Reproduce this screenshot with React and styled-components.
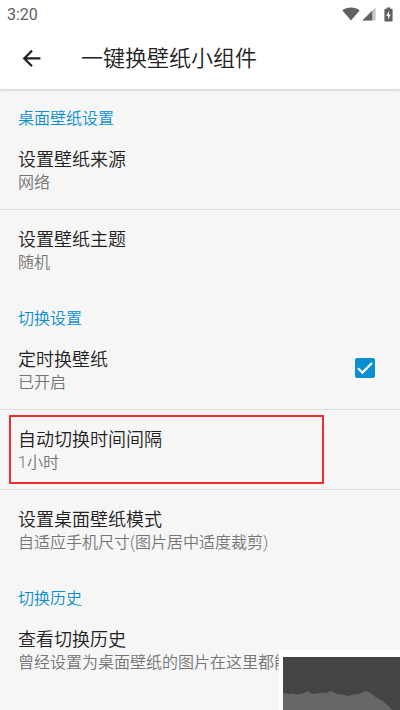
import React, { useState } from 'react';
import styled, { createGlobalStyle } from 'styled-components';

const GlobalStyle = createGlobalStyle`
  * {
    box-sizing: border-box;
  }

  body {
    margin: 0;
    background: #f6f6f6;
    font-family: Roboto, "Noto Sans CJK SC", sans-serif;
    color: #212121;
  }
`;

const Page = styled.div`
  position: relative;
  min-height: 100vh;
  overflow: hidden;
  background: #f6f6f6;
`;

const TopBar = styled.header`
  position: relative;
  background: #ffffff;
  box-shadow: 0 1px 3px rgba(0, 0, 0, 0.2);
`;

const StatusBar = styled.div`
  display: flex;
  justify-content: space-between;
  align-items: center;
  height: 28px;
  padding: 0 7px;
  font-size: 16px;
  color: #616161;
`;

const StatusIcons = styled.div`
  display: flex;
  align-items: center;

  svg {
    display: block;
  }
`;

const Toolbar = styled.div`
  display: flex;
  align-items: center;
  gap: 37px;
  height: 61px;
  padding: 0 19px;
`;

const BackButton = styled.button`
  display: flex;
  padding: 0;
  border: none;
  background: none;
  color: #212121;
  cursor: pointer;
`;

const PageTitle = styled.h1`
  margin: 0;
  font-size: 22px;
  font-weight: 350;
  line-height: 28px;
`;

const SectionTitle = styled.h2`
  height: 40px;
  margin: 0;
  padding: 18px 18px 0;
  font-size: 16px;
  font-weight: 350;
  line-height: 24px;
  color: #0a8fd0;
`;

const Row = styled.div`
  position: relative;
  display: flex;
  align-items: center;
  justify-content: space-between;
  height: 80px;
  padding: 2px 25px 0 18px;
  border: none;
  border-top: 1px solid ${props => (props.$divided ? '#dedede' : 'transparent')};
  background: none;
  font: inherit;
  font-weight: 350;
  color: inherit;
  text-align: left;
  cursor: pointer;
`;

const ButtonRow = styled(Row).attrs({ as: 'button', type: 'button' })`
  width: 100%;
`;

const CheckRow = styled(Row).attrs({ as: 'label' })``;

const RowText = styled.span`
  display: flex;
  flex-direction: column;
  white-space: nowrap;
`;

const RowTitle = styled.span`
  font-size: 18px;
  line-height: 24px;
`;

const RowSummary = styled.span`
  font-size: 16px;
  line-height: 22px;
  color: #757575;
`;

const Highlight = styled.span`
  position: absolute;
  top: 5px;
  right: 76px;
  bottom: 5px;
  left: 9px;
  border: 2px solid #f52a2a;
  pointer-events: none;
`;

const CheckboxWrap = styled.span`
  position: relative;
  display: flex;
  margin-bottom: 5px;

  svg {
    position: absolute;
    inset: 0;
    pointer-events: none;
  }
`;

const Checkbox = styled.input`
  appearance: none;
  width: 20px;
  height: 20px;
  margin: 0;
  border: 2px solid #757575;
  border-radius: 2px;

  &:checked {
    border-color: #0a8fd0;
    background: #0a8fd0;
  }
`;

const Preview = styled.div`
  position: fixed;
  right: 0;
  bottom: 0;
  padding: 7px 0 0 4px;
  background: #ffffff;

  svg {
    display: block;
  }
`;

const WifiIcon = () => (
  <svg width="18" height="14" viewBox="0 0 18 14" aria-hidden="true">
    <path d="M9 13.6 L0.4 3.4 C2.6 1.5 5.6 0.6 9 0.6 C12.4 0.6 15.4 1.5 17.6 3.4 Z" fill="#616161" />
  </svg>
);

const SignalIcon = () => (
  <svg width="16" height="14" viewBox="0 0 16 14" aria-hidden="true">
    <path d="M15.6 0.6 V13.6 H2.4 Z" fill="#c4c4c4" />
    <path d="M12.2 3.8 V13.6 H2.4 Z" fill="#616161" />
  </svg>
);

const BatteryIcon = () => (
  <svg width="9" height="15" viewBox="0 0 9 15" aria-hidden="true">
    <path d="M2.8 0.4 H6.2 V1.8 H7.6 Q8.6 1.8 8.6 2.8 V13.6 Q8.6 14.6 7.6 14.6 H1.4 Q0.4 14.6 0.4 13.6 V2.8 Q0.4 1.8 1.4 1.8 H2.8 Z" fill="#616161" />
    <path d="M5 4 L2.2 8.8 H4.1 V12.4 L6.8 7.4 H5 Z" fill="#ffffff" />
  </svg>
);

const BatterySlot = styled.span`
  padding-left: 8px;
`;

const BackIcon = () => (
  <svg width="25" height="24" viewBox="0 0 25 24" fill="none" aria-hidden="true">
    <path d="M21.4 11.4 H5.4 M13 3.6 L5.2 11.4 L13 19.2" stroke="currentColor" strokeWidth="2.2" />
  </svg>
);

const SettingRow = ({ title, summary, divided, highlighted }) => (
  <ButtonRow $divided={divided}>
    <RowText>
      <RowTitle>{title}</RowTitle>
      <RowSummary>{summary}</RowSummary>
    </RowText>
    {highlighted && <Highlight />}
  </ButtonRow>
);

const App = () => {
  const [timerOn, setTimerOn] = useState(true);

  return (
    <Page>
      <GlobalStyle />
      <TopBar>
        <StatusBar>
          <span>3:20</span>
          <StatusIcons>
            <WifiIcon />
            <SignalIcon />
            <BatterySlot>
              <BatteryIcon />
            </BatterySlot>
          </StatusIcons>
        </StatusBar>
        <Toolbar>
          <BackButton type="button" aria-label="返回">
            <BackIcon />
          </BackButton>
          <PageTitle>一键换壁纸小组件</PageTitle>
        </Toolbar>
      </TopBar>

      <main>
        <SectionTitle>桌面壁纸设置</SectionTitle>
        <SettingRow title="设置壁纸来源" summary="网络" />
        <SettingRow title="设置壁纸主题" summary="随机" divided />

        <SectionTitle>切换设置</SectionTitle>
        <CheckRow htmlFor="timer">
          <RowText>
            <RowTitle>定时换壁纸</RowTitle>
            <RowSummary>{timerOn ? '已开启' : '已关闭'}</RowSummary>
          </RowText>
          <CheckboxWrap>
            <Checkbox
              id="timer"
              type="checkbox"
              checked={timerOn}
              onChange={e => setTimerOn(e.target.checked)}
            />
            {timerOn && (
              <svg width="20" height="20" viewBox="0 0 20 20" fill="none" aria-hidden="true">
                <path d="M3 10.2 L7.4 14.6 L17 5" stroke="#ffffff" strokeWidth="2.2" />
              </svg>
            )}
          </CheckboxWrap>
        </CheckRow>
        <SettingRow title="自动切换时间间隔" summary="1小时" divided highlighted />
        <SettingRow title="设置桌面壁纸模式" summary="自适应手机尺寸(图片居中适度裁剪)" divided />

        <SectionTitle>切换历史</SectionTitle>
        <SettingRow title="查看切换历史" summary="曾经设置为桌面壁纸的图片在这里都能" />
      </main>

      <Preview>
        <svg width="117" height="53" viewBox="0 0 117 53" aria-hidden="true">
          <rect width="117" height="53" fill="#444444" />
          <path
            d="M0 36 L5 37 L9 36.5 L13 37.5 L18 37 L21 36 L25 34 L28 36.5 L31 37 L35 36.5 L39 35.5 L43 36 L46 35 L48 33.5 L51 35.5 L54 37 L59 37.5 L65 39 L70 37.5 L76 37 L80 35 L83 34 L87 35.5 L91 39 L95 41.5 L100 44 L104 48 L106 49 L109 53 H0 Z"
            fill="#676767"
          />
        </svg>
      </Preview>
    </Page>
  );
};

export default App;
